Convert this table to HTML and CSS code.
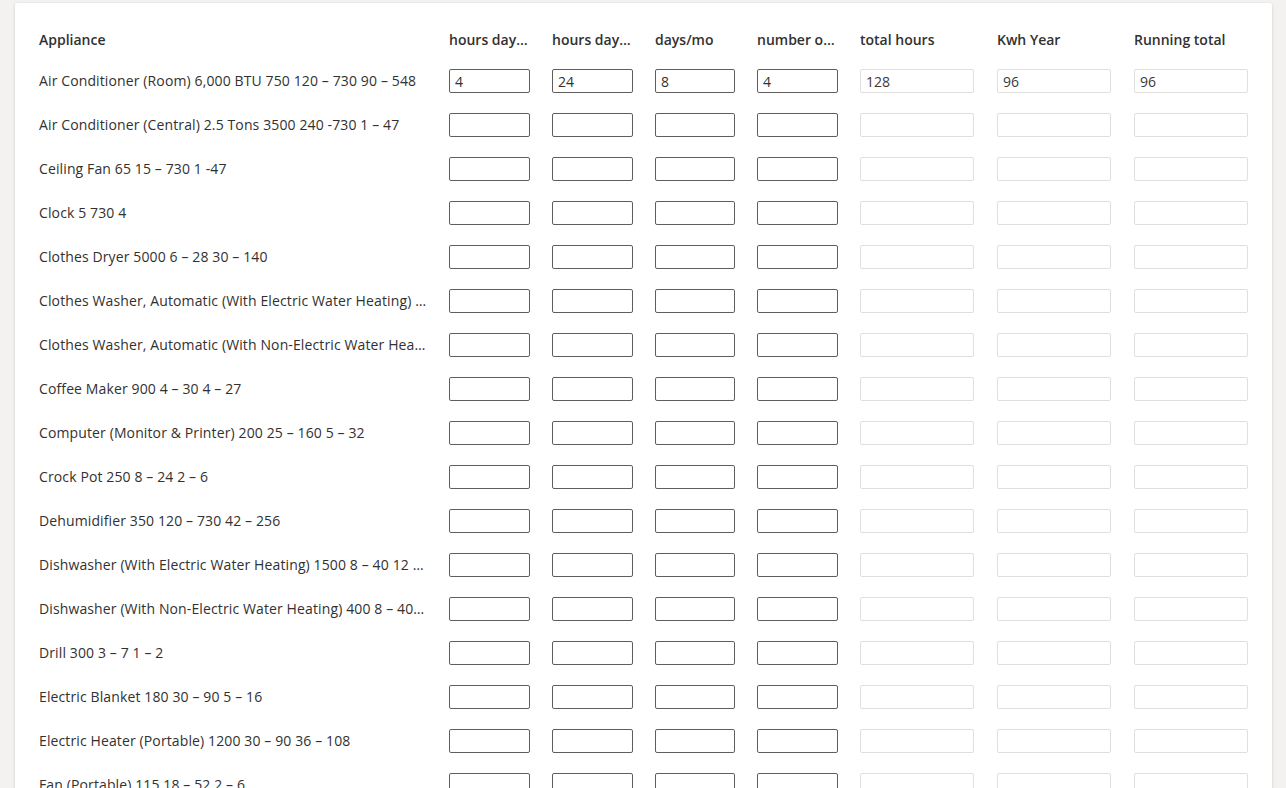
FILE: index.html
```html
<!DOCTYPE html>
<html>
<head>
<meta charset="utf-8">
<link rel="stylesheet" href="styles.css">
</head>
<body>
<div class="card">
  <div class="grid">
    <div class="hd">Appliance</div>
    <div class="hd">hours day…</div>
    <div class="hd">hours day…</div>
    <div class="hd">days/mo</div>
    <div class="hd">number o…</div>
    <div class="hd">total hours</div>
    <div class="hd">Kwh Year</div>
    <div class="hd">Running total</div>

    <div class="name">Air Conditioner (Room) 6,000 BTU 750 120 – 730 90 – 548</div>
    <div class="cell"><input class="in" value="4"></div>
    <div class="cell"><input class="in" value="24"></div>
    <div class="cell"><input class="in" value="8"></div>
    <div class="cell"><input class="in" value="4"></div>
    <div class="cell"><input class="ro" value="128" readonly></div>
    <div class="cell"><input class="ro" value="96" readonly></div>
    <div class="cell"><input class="ro" value="96" readonly></div>

    <div class="name">Air Conditioner (Central) 2.5 Tons 3500 240 -730 1 – 47</div>
    <div class="cell"><input class="in"></div><div class="cell"><input class="in"></div><div class="cell"><input class="in"></div><div class="cell"><input class="in"></div>
    <div class="cell"><input class="ro" readonly></div><div class="cell"><input class="ro" readonly></div><div class="cell"><input class="ro" readonly></div>

    <div class="name">Ceiling Fan 65 15 – 730 1 -47</div>
    <div class="cell"><input class="in"></div><div class="cell"><input class="in"></div><div class="cell"><input class="in"></div><div class="cell"><input class="in"></div>
    <div class="cell"><input class="ro" readonly></div><div class="cell"><input class="ro" readonly></div><div class="cell"><input class="ro" readonly></div>

    <div class="name">Clock 5 730 4</div>
    <div class="cell"><input class="in"></div><div class="cell"><input class="in"></div><div class="cell"><input class="in"></div><div class="cell"><input class="in"></div>
    <div class="cell"><input class="ro" readonly></div><div class="cell"><input class="ro" readonly></div><div class="cell"><input class="ro" readonly></div>

    <div class="name">Clothes Dryer 5000 6 – 28 30 – 140</div>
    <div class="cell"><input class="in"></div><div class="cell"><input class="in"></div><div class="cell"><input class="in"></div><div class="cell"><input class="in"></div>
    <div class="cell"><input class="ro" readonly></div><div class="cell"><input class="ro" readonly></div><div class="cell"><input class="ro" readonly></div>

    <div class="name">Clothes Washer, Automatic (With Electric Water Heating) 2500 5 – 17 13 – 43</div>
    <div class="cell"><input class="in"></div><div class="cell"><input class="in"></div><div class="cell"><input class="in"></div><div class="cell"><input class="in"></div>
    <div class="cell"><input class="ro" readonly></div><div class="cell"><input class="ro" readonly></div><div class="cell"><input class="ro" readonly></div>

    <div class="name">Clothes Washer, Automatic (With Non-Electric Water Heating) 250 5 – 17 1 – 4</div>
    <div class="cell"><input class="in"></div><div class="cell"><input class="in"></div><div class="cell"><input class="in"></div><div class="cell"><input class="in"></div>
    <div class="cell"><input class="ro" readonly></div><div class="cell"><input class="ro" readonly></div><div class="cell"><input class="ro" readonly></div>

    <div class="name">Coffee Maker 900 4 – 30 4 – 27</div>
    <div class="cell"><input class="in"></div><div class="cell"><input class="in"></div><div class="cell"><input class="in"></div><div class="cell"><input class="in"></div>
    <div class="cell"><input class="ro" readonly></div><div class="cell"><input class="ro" readonly></div><div class="cell"><input class="ro" readonly></div>

    <div class="name">Computer (Monitor &amp; Printer) 200 25 – 160 5 – 32</div>
    <div class="cell"><input class="in"></div><div class="cell"><input class="in"></div><div class="cell"><input class="in"></div><div class="cell"><input class="in"></div>
    <div class="cell"><input class="ro" readonly></div><div class="cell"><input class="ro" readonly></div><div class="cell"><input class="ro" readonly></div>

    <div class="name">Crock Pot 250 8 – 24 2 – 6</div>
    <div class="cell"><input class="in"></div><div class="cell"><input class="in"></div><div class="cell"><input class="in"></div><div class="cell"><input class="in"></div>
    <div class="cell"><input class="ro" readonly></div><div class="cell"><input class="ro" readonly></div><div class="cell"><input class="ro" readonly></div>

    <div class="name">Dehumidifier 350 120 – 730 42 – 256</div>
    <div class="cell"><input class="in"></div><div class="cell"><input class="in"></div><div class="cell"><input class="in"></div><div class="cell"><input class="in"></div>
    <div class="cell"><input class="ro" readonly></div><div class="cell"><input class="ro" readonly></div><div class="cell"><input class="ro" readonly></div>

    <div class="name">Dishwasher (With Electric Water Heating) 1500 8 – 40 12 – 60</div>
    <div class="cell"><input class="in"></div><div class="cell"><input class="in"></div><div class="cell"><input class="in"></div><div class="cell"><input class="in"></div>
    <div class="cell"><input class="ro" readonly></div><div class="cell"><input class="ro" readonly></div><div class="cell"><input class="ro" readonly></div>

    <div class="name">Dishwasher (With Non-Electric Water Heating) 400 8 – 40 3 – 16</div>
    <div class="cell"><input class="in"></div><div class="cell"><input class="in"></div><div class="cell"><input class="in"></div><div class="cell"><input class="in"></div>
    <div class="cell"><input class="ro" readonly></div><div class="cell"><input class="ro" readonly></div><div class="cell"><input class="ro" readonly></div>

    <div class="name">Drill 300 3 – 7 1 – 2</div>
    <div class="cell"><input class="in"></div><div class="cell"><input class="in"></div><div class="cell"><input class="in"></div><div class="cell"><input class="in"></div>
    <div class="cell"><input class="ro" readonly></div><div class="cell"><input class="ro" readonly></div><div class="cell"><input class="ro" readonly></div>

    <div class="name">Electric Blanket 180 30 – 90 5 – 16</div>
    <div class="cell"><input class="in"></div><div class="cell"><input class="in"></div><div class="cell"><input class="in"></div><div class="cell"><input class="in"></div>
    <div class="cell"><input class="ro" readonly></div><div class="cell"><input class="ro" readonly></div><div class="cell"><input class="ro" readonly></div>

    <div class="name">Electric Heater (Portable) 1200 30 – 90 36 – 108</div>
    <div class="cell"><input class="in"></div><div class="cell"><input class="in"></div><div class="cell"><input class="in"></div><div class="cell"><input class="in"></div>
    <div class="cell"><input class="ro" readonly></div><div class="cell"><input class="ro" readonly></div><div class="cell"><input class="ro" readonly></div>

    <div class="name">Fan (Portable) 115 18 – 52 2 – 6</div>
    <div class="cell"><input class="in"></div><div class="cell"><input class="in"></div><div class="cell"><input class="in"></div><div class="cell"><input class="in"></div>
    <div class="cell"><input class="ro" readonly></div><div class="cell"><input class="ro" readonly></div><div class="cell"><input class="ro" readonly></div>

    <div class="name">Freezer (Frostless 15 cu. ft.) 440 167 – 440 73 – 193</div>
    <div class="cell"><input class="in"></div><div class="cell"><input class="in"></div><div class="cell"><input class="in"></div><div class="cell"><input class="in"></div>
    <div class="cell"><input class="ro" readonly></div><div class="cell"><input class="ro" readonly></div><div class="cell"><input class="ro" readonly></div>
  </div>
</div>
</body>
</html>
```

FILE: styles.css
```css
html, body {
  margin: 0;
  padding: 0;
  overflow: hidden;
  height: 100%;
}
body {
  background: #f3f2f1;
  font-family: "Open Sans", "Noto Sans", sans-serif;
  font-size: 14px;
  letter-spacing: 0.12px;
  color: #323130;
  padding: 3px 14px 0 15px;
  box-sizing: border-box;
}
.card {
  background: #fff;
  border-radius: 2px;
  box-shadow: 0 1.6px 3.6px rgba(0,0,0,0.13), 0 0.3px 0.9px rgba(0,0,0,0.11);
  padding: 16px 24px 24px 24px;
}
.grid {
  display: grid;
  grid-template-columns: 388px 81px 81px 80px 81px 115px 115px 114px;
  column-gap: 22px;
  grid-auto-rows: 44px;
  grid-template-rows: 40px;
}
.hd {
  font-weight: 600;
  letter-spacing: 0;
  display: flex;
  align-items: center;
  white-space: nowrap;
  overflow: hidden;
}
.name {
  line-height: 44px;
  white-space: nowrap;
  overflow: hidden;
  text-overflow: ellipsis;
}
.cell {
  display: flex;
  align-items: center;
}
.in, .ro {
  box-sizing: border-box;
  height: 24px;
  margin: 0;
  border-radius: 2px;
  font-family: inherit;
  font-size: 14px;
  padding: 0 5px;
  outline: none;
  background: #fff;
}
.in {
  width: 81px;
  border: 1px solid #605e5c;
  color: #323130;
}
.cell:nth-child(8n+4) .in {
  width: 80px;
}
.ro {
  width: 114px;
  border: 1px solid #e1dfdd;
  color: #3b3a39;
}
```
